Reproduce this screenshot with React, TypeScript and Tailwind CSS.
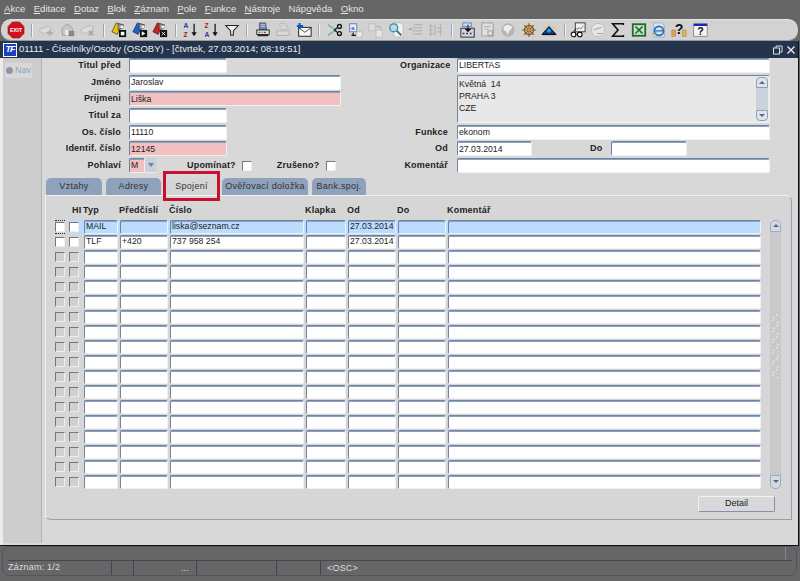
import type { ReactNode } from "react";

const inputBase =
  "border border-t-[#6d84a6] border-l-[#6d84a6] border-r-[#f1f1f1] border-b-[#f1f1f1] rounded-[2px] shadow-[inset_0_1px_0_#8ea1bb] text-[8.7px] leading-none text-[#222] flex items-center pl-[1px] overflow-hidden whitespace-nowrap";

function Field({ value, pink, className }: { value?: string; pink?: boolean; className?: string }) {
  return <div className={`${inputBase} h-[15px] ${pink ? "bg-[#f2c0c0]" : "bg-white"} ${className ?? ""}`}>{value}</div>;
}

function Label({ children, className }: { children: ReactNode; className?: string }) {
  return <div className={`text-[9px] font-bold tracking-[0.2px] text-[#222] text-right leading-[15px] whitespace-nowrap ${className ?? ""}`}>{children}</div>;
}

function Check({ className }: { className?: string }) {
  return <div className={`w-[10px] h-[10px] border border-t-[#777] border-l-[#777] border-r-[#eee] border-b-[#eee] ${className ?? ""}`} />;
}

// toolbar pictures, roughly 16x16
const Svg = ({ children }: { children: ReactNode }) => (
  <svg width="16" height="16" viewBox="0 0 18 18">{children}</svg>
);

const Exit = () => (
  <svg width="18" height="18" viewBox="0 0 18 18">
    <polygon points="5.5,1 12.5,1 17,5.5 17,12.5 12.5,17 5.5,17 1,12.5 1,5.5" fill="#d2101e" stroke="#8d0b12" strokeWidth="0.6" />
    <text x="9" y="11" fontSize="5.5" fontWeight="700" fill="#fff" textAnchor="middle" fontFamily="Liberation Sans, sans-serif">EXIT</text>
  </svg>
);
const GrayPlus = () => (
  <Svg>
    <path d="M1 8l9-3 4 1-1 5-8 2-4-2z" fill="#dcdcdc" stroke="#b8b8b8" />
    <path d="M12 9v7M9 12.5h7" stroke="#aeaeae" strokeWidth="2" />
  </Svg>
);
const GrayHouse = () => (
  <Svg>
    <path d="M2 8l6-6 6 5v8H3z" fill="#c8c8c8" stroke="#9a9a9a" />
    <rect x="6" y="9" width="3" height="6" fill="#eee" />
    <rect x="10" y="10" width="6" height="6" fill="#888" />
  </Svg>
);
const GrayCross = () => (
  <Svg>
    <path d="M1 8l10-4 4 1-2 6-8 2-4-2z" fill="#dcdcdc" stroke="#b8b8b8" />
    <path d="M10 10l5 5M15 10l-5 5" stroke="#a8a8a8" strokeWidth="2" />
  </Svg>
);
const Folder = ({ color, mark }: { color: string; mark: ReactNode }) => (
  <Svg>
    <path d="M6 1l6 2-5 11-6-3z" fill={color} stroke="#222" strokeWidth="0.7" />
    <path d="M8 2l6 1-1 4-5 2z" fill="#999" stroke="#222" strokeWidth="0.6" />
    <path d="M11 4l3 .5-.6 2-2.4.5z" fill="#fff" />
    <rect x="9" y="9" width="8" height="8" fill="#111" />
    {mark}
  </Svg>
);
const SortAZ = ({ top, bottom, topColor, bottomColor }: { top: string; bottom: string; topColor: string; bottomColor: string }) => (
  <Svg>
    <text x="0.5" y="7" fontSize="7.5" fontWeight="700" fill={topColor} fontFamily="Liberation Sans, sans-serif">{top}</text>
    <text x="0.5" y="16.5" fontSize="7.5" fontWeight="700" fill={bottomColor} fontFamily="Liberation Sans, sans-serif">{bottom}</text>
    <path d="M12.5 2v12" stroke="#111" strokeWidth="1.4" />
    <path d="M9.5 11.5h6l-3 4.5z" fill="#111" />
  </Svg>
);
const Funnel = () => (
  <Svg>
    <path d="M2 4h14l-5.5 6v5h-3v-5z" fill="#f4f4f4" stroke="#222" strokeWidth="1.2" />
  </Svg>
);
const Printer = () => (
  <Svg>
    <path d="M5 1h7l1 8H5z" fill="#6d87bd" stroke="#334" strokeWidth="0.7" />
    <path d="M6.5 3h5M6.5 5h5" stroke="#dde" strokeWidth="0.8" />
    <rect x="2" y="9" width="14" height="5" fill="#ddd" stroke="#222" />
    <rect x="3" y="14" width="12" height="2" fill="#222" />
    <rect x="4" y="11" width="2" height="1.5" fill="#2a9a3a" />
    <rect x="7" y="11" width="2" height="1.5" fill="#d8a020" />
    <rect x="10" y="11" width="2" height="1.5" fill="#c02020" />
  </Svg>
);
const GrayPrinter = () => (
  <Svg>
    <path d="M5 2l7-1 3 6-7 2z" fill="#ddd" stroke="#b4b4b4" />
    <rect x="2" y="10" width="14" height="5" fill="#d8d8d8" stroke="#adadad" />
    <path d="M7 4l5-1M8 6l5-1" stroke="#b4b4b4" strokeWidth="0.7" />
  </Svg>
);
const Envelope = () => (
  <Svg>
    <rect x="3" y="6" width="14" height="10" fill="#f6f6f6" stroke="#111" />
    <path d="M3 6.5l7 5 7-5" fill="none" stroke="#111" strokeWidth="0.8" />
    <path d="M4 1v7M1 4.5h7" stroke="#0a5ac8" strokeWidth="2.4" />
  </Svg>
);
const Scissors = () => (
  <Svg>
    <path d="M1 3l10 7M1 15l10-7" stroke="#7fb0b0" strokeWidth="1.6" />
    <circle cx="14" cy="5" r="2.2" fill="none" stroke="#111" strokeWidth="1.5" />
    <circle cx="14" cy="13" r="2.2" fill="none" stroke="#111" strokeWidth="1.5" />
    <path d="M8 9l4-3M8 9l4 3" stroke="#111" strokeWidth="1.2" />
  </Svg>
);
const CopyDoc = () => (
  <Svg>
    <rect x="3" y="2" width="8" height="9" fill="#e8ecf6" stroke="#5a78c8" />
    <text x="4.5" y="9" fontSize="7" fill="#1a3ab0" fontFamily="Liberation Sans, sans-serif">a</text>
    <path d="M7 12v3h3M5 15h2" stroke="#111" strokeWidth="1.4" fill="none" />
    <rect x="11" y="11" width="6" height="6" fill="#eee" stroke="#bbb" />
  </Svg>
);
const GrayDoc = () => (
  <Svg>
    <rect x="1" y="2" width="7" height="8" fill="#ddd" stroke="#bbb" />
    <path d="M9 5h5v3" stroke="#aaa" fill="none" />
    <rect x="9" y="9" width="7" height="8" fill="#e6e6e6" stroke="#bbb" />
  </Svg>
);
const Magnifier = () => (
  <Svg>
    <path d="M5 1h9l3 3v13H7z" fill="#f2f2f2" stroke="#bbb" />
    <circle cx="6.5" cy="6.5" r="4.5" fill="#b9d9ea" stroke="#3a8a9a" strokeWidth="1.4" />
    <path d="M10 10l5 5" stroke="#2d6f80" strokeWidth="2" />
  </Svg>
);
const GrayLines = () => (
  <Svg>
    <path d="M7 3h9M7 6.5h9M7 10h9M7 13.5h9" stroke="#a8a8a8" />
    <path d="M6 3v11" stroke="#bbb" />
    <path d="M1 8h3" stroke="#a0a0a0" strokeWidth="2" />
  </Svg>
);
const GrayColumns = () => (
  <Svg>
    <path d="M3 2v14M8 2v14M14 2v14" stroke="#adadad" />
    <path d="M1 5h5M1 9h5M1 13h5M10 7h6M10 11h6" stroke="#b4b4b4" strokeWidth="1.4" />
  </Svg>
);
const Tray = () => (
  <Svg>
    <rect x="1" y="7" width="15" height="10" fill="#cfd6e2" stroke="#222" />
    <path d="M3 1h10v4H3z" fill="#c8d8f0" stroke="#3c6ec8" strokeWidth="0.8" />
    <path d="M9 3v7M6 8h6l-3 3z" stroke="#111" fill="#111" />
    <path d="M3 13h2M7 13h2M11 13h2" stroke="#333" strokeWidth="1.6" />
  </Svg>
);
const GrayPage = () => (
  <Svg>
    <path d="M2 1h11l2 2v13H2z" fill="#e0e0e0" stroke="#aaa" strokeWidth="1.4" />
    <path d="M5 5h7M5 8h5" stroke="#aaa" />
    <rect x="9" y="10" width="5" height="5" fill="none" stroke="#999" />
  </Svg>
);
const Globe = () => (
  <Svg>
    <circle cx="9" cy="9" r="7.5" fill="#b5b5b5" />
    <path d="M4 5l5-2 5 2-2 4-2 1-1 5-2-4-3-2z" fill="#ececec" />
  </Svg>
);
const Wheel = () => (
  <Svg>
    <circle cx="9" cy="9" r="5" fill="none" stroke="#8a5a20" strokeWidth="1.6" />
    <path d="M9 1v16M1 9h16M3.5 3.5l11 11M14.5 3.5l-11 11" stroke="#8a5a20" strokeWidth="1.2" />
    <circle cx="9" cy="9" r="1.5" fill="#d8a040" />
  </Svg>
);
const Pyramid = () => (
  <Svg>
    <path d="M1 14L9 5l8 9z" fill="#123a90" stroke="#111" />
    <path d="M6.5 10L9 7l2.5 3L9 12.5z" fill="#20a8f0" />
    <path d="M2 14h14" stroke="#111" strokeWidth="1.5" />
    <path d="M2 8l3-2M9 2.5v1.5M16 8l-3-2M5 4l1 1M13 4l-1 1" stroke="#e0c020" />
  </Svg>
);
const Glasses = () => (
  <Svg>
    <rect x="6" y="1" width="11" height="10" fill="#f0f0f0" stroke="#333" />
    <path d="M8 9l2-3 2 2 3-4" stroke="#777" fill="none" />
    <circle cx="4" cy="14" r="2.6" fill="#fff" stroke="#111" strokeWidth="1.2" />
    <circle cx="11" cy="14" r="2.6" fill="#fff" stroke="#111" strokeWidth="1.2" />
    <path d="M6.5 14h2M4 11l3-4" stroke="#111" />
  </Svg>
);
const GrayDisc = () => (
  <Svg>
    <circle cx="9" cy="9" r="7.5" fill="#e6e6e6" stroke="#bbb" />
    <path d="M4 9l9-3M8 13h6" stroke="#aaa" strokeWidth="1.2" />
  </Svg>
);
const Sigma = () => (
  <Svg>
    <path d="M15 3.5V2H3l6 7-6 7h12v-1.5" fill="none" stroke="#111" strokeWidth="1.8" />
  </Svg>
);
const Excel = () => (
  <Svg>
    <rect x="1" y="1.5" width="16" height="15" fill="#1d6b2c" />
    <rect x="3" y="3.5" width="12" height="11" fill="#c9e0c9" />
    <path d="M5 5l8 8M13 5l-8 8" stroke="#1d6b2c" strokeWidth="1.8" />
  </Svg>
);
const Ie = () => (
  <Svg>
    <path d="M3 1h9l3 3v13H3z" fill="#dbe6f5" stroke="#9ab" />
    <circle cx="9" cy="10" r="5" fill="none" stroke="#1c6fd0" strokeWidth="2" />
    <path d="M5 10h8" stroke="#1c6fd0" strokeWidth="1.5" />
    <path d="M1 13c4 1 10-4 14-8" stroke="#e0a020" fill="none" />
  </Svg>
);
const HelpBooks = () => (
  <Svg>
    <rect x="1" y="9" width="4" height="7" fill="#e0a050" stroke="#963" strokeWidth="0.5" />
    <rect x="13" y="9" width="4" height="7" fill="#e0b840" stroke="#963" strokeWidth="0.5" />
    <text x="9" y="13" fontSize="16" fontWeight="700" fill="#111" textAnchor="middle" fontFamily="Liberation Sans, sans-serif">?</text>
  </Svg>
);
const HelpWin = () => (
  <Svg>
    <rect x="2" y="2" width="15" height="14" fill="#f4f4f4" stroke="#555" strokeWidth="0.6" />
    <rect x="2" y="2" width="15" height="2.5" fill="#2020c8" />
    <text x="9.5" y="15" fontSize="12" fontWeight="700" fill="#111" textAnchor="middle" fontFamily="Liberation Sans, sans-serif">?</text>
  </Svg>
);

const groups: ReactNode[][] = [
  [<Exit />],
  [<GrayPlus />, <GrayHouse />, <GrayCross />],
  [
    <Folder color="#f0c010" mark={<path d="M11 11h4v4h-4z" fill="#fff" />} />,
    <Folder color="#1a60d8" mark={<path d="M11 10.5l4 2.5-4 2.5z" fill="#fff" />} />,
    <Folder color="#d02020" mark={<path d="M11 11l4 4M15 11l-4 4" stroke="#fff" />} />,
  ],
  [
    <SortAZ top="A" bottom="Z" topColor="#1a3ab0" bottomColor="#b01818" />,
    <SortAZ top="Z" bottom="A" topColor="#b01818" bottomColor="#1a3ab0" />,
    <Funnel />,
  ],
  [<Printer />, <GrayPrinter />, <Envelope />],
  [<Scissors />, <CopyDoc />, <GrayDoc />, <Magnifier />, <GrayLines />, <GrayColumns />],
  [<Tray />, <GrayPage />, <Globe />, <Wheel />, <Pyramid />],
  [<Glasses />, <GrayDisc />, <Sigma />, <Excel />, <Ie />, <HelpBooks />, <HelpWin />],
];

const menu: [string, string, string][] = [
  ["", "A", "kce"],
  ["", "E", "ditace"],
  ["", "D", "otaz"],
  ["", "B", "lok"],
  ["", "Z", "áznam"],
  ["", "P", "ole"],
  ["", "F", "unkce"],
  ["", "N", "ástroje"],
  ["Náp", "o", "věda"],
  ["", "O", "kno"],
];

const columns = [
  { name: "Typ", w: "w-[34px]" },
  { name: "Předčíslí", w: "w-[48px]" },
  { name: "Číslo", w: "w-[134px]" },
  { name: "Klapka", w: "w-[40px]" },
  { name: "Od", w: "w-[48px]" },
  { name: "Do", w: "w-[48px]" },
  { name: "Komentář", w: "w-[313px]" },
];

const rows: string[][] = [
  ["MAIL", "", "liska@seznam.cz", "", "27.03.2014", "", ""],
  ["TLF", "+420", "737 958 254", "", "27.03.2014", "", ""],
  ...Array.from({ length: 16 }, () => ["", "", "", "", "", "", ""]),
];

const tabs = [
  { name: "Vztahy", w: "w-[56px]" },
  { name: "Adresy", w: "w-[55px] ml-[4px]" },
  { name: "Spojení", w: "w-[51px] ml-[5px]", active: true },
  { name: "Ověřovací doložka", w: "w-[86px] ml-[5px]" },
  { name: "Bank.spoj.", w: "w-[54px] ml-[4px]" },
];

function Grip() {
  return (
    <svg width="9" height="66" viewBox="0 0 9 66" className="mt-[82px] ml-[1px]">
      {Array.from({ length: 12 }, (_, i) => (
        <g key={i} fill="#e8e8e8">
          <rect x={i % 2 ? 1 : 5} y={i * 5.5} width="1.5" height="1.5" />
          <rect x={i % 2 ? 6 : 2} y={i * 5.5 + 2.5} width="1.5" height="1.5" />
        </g>
      ))}
    </svg>
  );
}

export default function App() {
  return (
    <div className="w-[800px] h-[581px] bg-[#666666] overflow-hidden flex flex-col font-['Liberation_Sans',Arial,sans-serif]">
      <div className="h-[19px] flex items-center gap-[8.3px] px-[4px] text-[9.6px] text-[#e4e4e4]">
        {menu.map(([a, u, b]) => (
          <span key={u + b}>
            {a}
            <u>{u}</u>
            {b}
          </span>
        ))}
      </div>

      <div className="h-[22px] mx-[1px] mr-[2px] rounded-[10px] bg-[#d2d2d2] border-t border-t-[#e4e4e4] border-b border-b-[#9a9a9a] flex items-center pl-[5px]">
        {groups.map((group, i) => (
          <div key={i} className="flex items-center">
            {i > 0 && <div className={`w-[2px] h-[13px] ml-[4.5px] ${i === 7 ? "mr-[2px]" : "mr-[4.5px]"} border-l border-l-[#8fa6c6] border-r border-r-[#f2f2f2]`} />}
            {group.map((icon, j) => (
              <div key={j} className="w-[20.3px] flex justify-center">
                {icon}
              </div>
            ))}
          </div>
        ))}
      </div>

      <div className="h-[505px] w-[799px] flex flex-col border-r border-r-[#111] border-b border-b-[#111]">
        <div className="h-[17px] bg-[#24344d] flex items-center pl-[3px] pr-[2px] text-[9.5px] text-[#e8ecf2]">
          <div className="w-[14px] h-[14px] bg-[#1a3fc0] border border-white text-white text-[9px] font-bold italic flex items-center justify-center leading-none tracking-[-1px]">TF</div>
          <span className="ml-[2px]">01111 - Číselníky/Osoby (OSOBY) - [čtvrtek, 27.03.2014; 08:19:51]</span>
          <svg width="10" height="10" viewBox="0 0 10 10" className="ml-auto" fill="none" stroke="#d8dde6">
            <rect x="0.5" y="3" width="6" height="6" />
            <path d="M3 3V1h6v6H6.5" />
          </svg>
          <svg width="10" height="10" viewBox="0 0 10 10" className="ml-[3px]" stroke="#e8ecf2" strokeWidth="1.4">
            <path d="M1.5 1.5l7 7M8.5 1.5l-7 7" />
          </svg>
        </div>

        <div className="flex-1 flex bg-[#d8d8d8] border-l-[3px] border-l-[#ececec]">
          <div className="w-[39px] bg-[#cdcdcd] border-r border-r-[#b4b4b4] mb-[2px] pt-[5px] pl-[2px]">
            <div className="w-[27px] h-[15px] bg-[#d8d8d8] flex items-center gap-[2px] pl-[1px] text-[9px] text-[#8ea2be]">
              <span className="w-[7px] h-[7px] rounded-full bg-[#8a96a6]" />
              Nav
            </div>
          </div>

          <div className="flex-1 flex flex-col">
            <div className="flex">
              <div className="w-[358px] grid grid-cols-[79px_auto] gap-x-[8px] grid-rows-[repeat(7,15px)] gap-y-[1.7px] justify-start">
                <Label>Titul před</Label>
                <Field className="w-[98px]" />
                <Label>Jméno</Label>
                <Field value="Jaroslav" className="w-[212px]" />
                <Label>Prijmeni</Label>
                <Field value="Liška" pink className="w-[212px]" />
                <Label>Titul za</Label>
                <Field className="w-[98px]" />
                <Label>Os. číslo</Label>
                <Field value="11110" className="w-[98px]" />
                <Label>Identif. číslo</Label>
                <Field value="12145" pink className="w-[98px]" />
                <Label>Pohlaví</Label>
                <div className="flex items-center">
                  <div className={`${inputBase} h-[15px] w-[16px] bg-[#f2c0c0]`}>M</div>
                  <div className="w-[11px] h-[15px] bg-[#c9d0da] flex items-center justify-center border-b border-b-[#eee]">
                    <div className="w-0 h-0 border-x-[3px] border-x-transparent border-t-[4px] border-t-[#6d84a6]" />
                  </div>
                  <Label className="ml-[31px]">Upomínat?</Label>
                  <Check className="ml-[6px] bg-white" />
                  <Label className="ml-[25px]">Zrušeno?</Label>
                  <Check className="ml-[7px] bg-white" />
                </div>
              </div>

              <div className="grid grid-cols-[48px_313px] gap-x-[9px] grid-rows-[repeat(7,15px)] gap-y-[1.7px]">
                <Label>Organizace</Label>
                <Field value="LIBERTAS" />
                <div className="row-span-3 col-start-2 flex border border-t-[#6d84a6] border-l-[#6d84a6] border-r-[#f1f1f1] border-b-[#f1f1f1] rounded-[2px] bg-[#e8e8e8]">
                  <div className="flex-1 text-[8.7px] leading-[12px] text-[#222] pl-[1px] pt-[2px] whitespace-pre">
                    <div>Květná  14</div>
                    <div>PRAHA 3</div>
                    <div>CZE</div>
                  </div>
                  <div className="w-[12px] mr-[1px] flex flex-col my-[1px]">
                    <div className="h-[11px] bg-[#dfe3ea] border border-[#8ea1bb] rounded-t-[4px] flex items-center justify-center">
                      <div className="w-0 h-0 border-x-[3px] border-x-transparent border-b-[3px] border-b-[#56698a]" />
                    </div>
                    <div className="flex-1 bg-[#ccd2dc]" />
                    <div className="h-[11px] bg-[#dfe3ea] border border-[#8ea1bb] rounded-b-[4px] flex items-center justify-center">
                      <div className="w-0 h-0 border-x-[3px] border-x-transparent border-t-[3px] border-t-[#56698a]" />
                    </div>
                  </div>
                </div>
                <Label className="row-start-5">Funkce</Label>
                <Field value="ekonom" className="row-start-5" />
                <Label className="row-start-6">Od</Label>
                <div className="row-start-6 flex items-center">
                  <Field value="27.03.2014" className="w-[75px]" />
                  <Label className="ml-[58px] w-[20px] !text-left">Do</Label>
                  <Field className="w-[76px] ml-[1px]" />
                </div>
                <Label className="row-start-7">Komentář</Label>
                <Field className="row-start-7" />
              </div>
            </div>

            <div className="flex items-end h-[17px] mt-[5px] ml-[4px]">
              {tabs.map((t) => (
                <div
                  key={t.name}
                  className={`${t.w} h-[17px] rounded-t-[5px] flex items-center justify-center text-[9px] tracking-[0.3px] text-[#333] relative ${t.active ? "bg-[#d6d6d6] z-10" : "bg-[#8fa2bb]"}`}
                >
                  {t.name}
                  {t.active && <div className="absolute -left-[3px] -right-[3px] -top-[7px] -bottom-[6px] border-[3px] border-[#c8102e]" />}
                </div>
              ))}
            </div>

            <div className="ml-[3px] w-[747px] h-[325px] bg-[#d6d6d6] border border-t-[#f0f0f0] border-l-[#f0f0f0] border-r-[#8da0b8] border-b-[#8da0b8] rounded-tr-[6px] rounded-bl-[6px] pt-[8px]">
              <div className="flex h-[14px] items-center pl-[26px] text-[9px] font-bold tracking-[0.2px] text-[#222]">
                <div className="w-[11px]">HI</div>
                {columns.map((c) => (
                  <div key={c.name} className={`${c.w} mr-[2px]`}>
                    {c.name}
                  </div>
                ))}
              </div>

              <div className="flex mt-[1.5px]">
                <div className="flex flex-col ml-[9px] gap-[1px]">
                  {rows.map((r, i) => (
                    <div key={i} className={`flex items-center h-[14px] ${i === 0 ? "bg-[linear-gradient(90deg,transparent_14px,#b9dcff_14px)]" : ""}`}>
                      <div className={i === 0 ? "border-y border-dotted border-[#222] py-px" : ""}>
                        <Check className={i < 2 ? "bg-white" : "bg-[#d0d0d0] border-[#999]"} />
                      </div>
                      <Check className={`ml-[4px] mr-[5px] ${i < 2 ? "bg-white" : "bg-[#d0d0d0] border-[#999]"}`} />
                      <div className="flex gap-[2px]">
                        {columns.map((c, j) => (
                          <div key={c.name} className={`${inputBase} h-[14px] ${c.w} ${i === 0 ? "bg-[#b9dcff]" : "bg-white"}`}>
                            {r[j]}
                          </div>
                        ))}
                      </div>
                    </div>
                  ))}
                </div>

                <div className="w-[11px] ml-[9px] flex flex-col">
                  <div className="h-[12px] bg-[#d4dae2] border border-[#9aabc2] rounded-t-[5px] flex items-center justify-center">
                    <div className="w-0 h-0 border-x-[3px] border-x-transparent border-b-[3px] border-b-[#56698a]" />
                  </div>
                  <div className="flex-1 bg-[#c9c9c9]">
                    <Grip />
                  </div>
                  <div className="h-[14px] bg-[#d4dae2] border border-[#9aabc2] rounded-b-[5px] flex items-center justify-center">
                    <div className="w-0 h-0 border-x-[3px] border-x-transparent border-t-[3px] border-t-[#56698a]" />
                  </div>
                </div>
              </div>

              <div className="flex justify-end pr-[16px] mt-[7px]">
                <button type="button" className="w-[77px] h-[16px] bg-[#d8d8d8] border border-t-[#f2f2f2] border-l-[#f2f2f2] border-r-[#7f93ae] border-b-[#7f93ae] rounded-[2px] text-[9px] leading-none text-[#222]">
                  Detail
                </button>
              </div>
            </div>
          </div>
        </div>
      </div>

      <div className="h-[30px] ml-[2px] mr-[3px] border border-[#4d5561] rounded-[7px] flex flex-col text-[9px] text-[#dcdcdc]">
        <div className="h-[15px] border-b border-b-[#414852] ml-[5px] mr-[4px] flex justify-end">
          <div className="w-px bg-[#7a8aa0] mr-[6px]" />
        </div>
        <div className="flex-1 flex items-center ml-[5px] tracking-[0.2px]">
          <div className="w-[103px]">Záznam: 1/2</div>
          <div className="w-[22px] h-full border-l border-l-[#3f4650]" />
          <div className="w-[63px] h-full border-l border-l-[#3f4650] text-right pr-[7px] leading-[14px]">...</div>
          <div className="w-[80px] h-full border-l border-l-[#3f4650]" />
          <div className="w-[44px] h-full border-l border-l-[#3f4650]" />
          <div className="h-full border-l border-l-[#3f4650] pl-[6px] leading-[14px]">&lt;OSC&gt;</div>
        </div>
      </div>
    </div>
  );
}
